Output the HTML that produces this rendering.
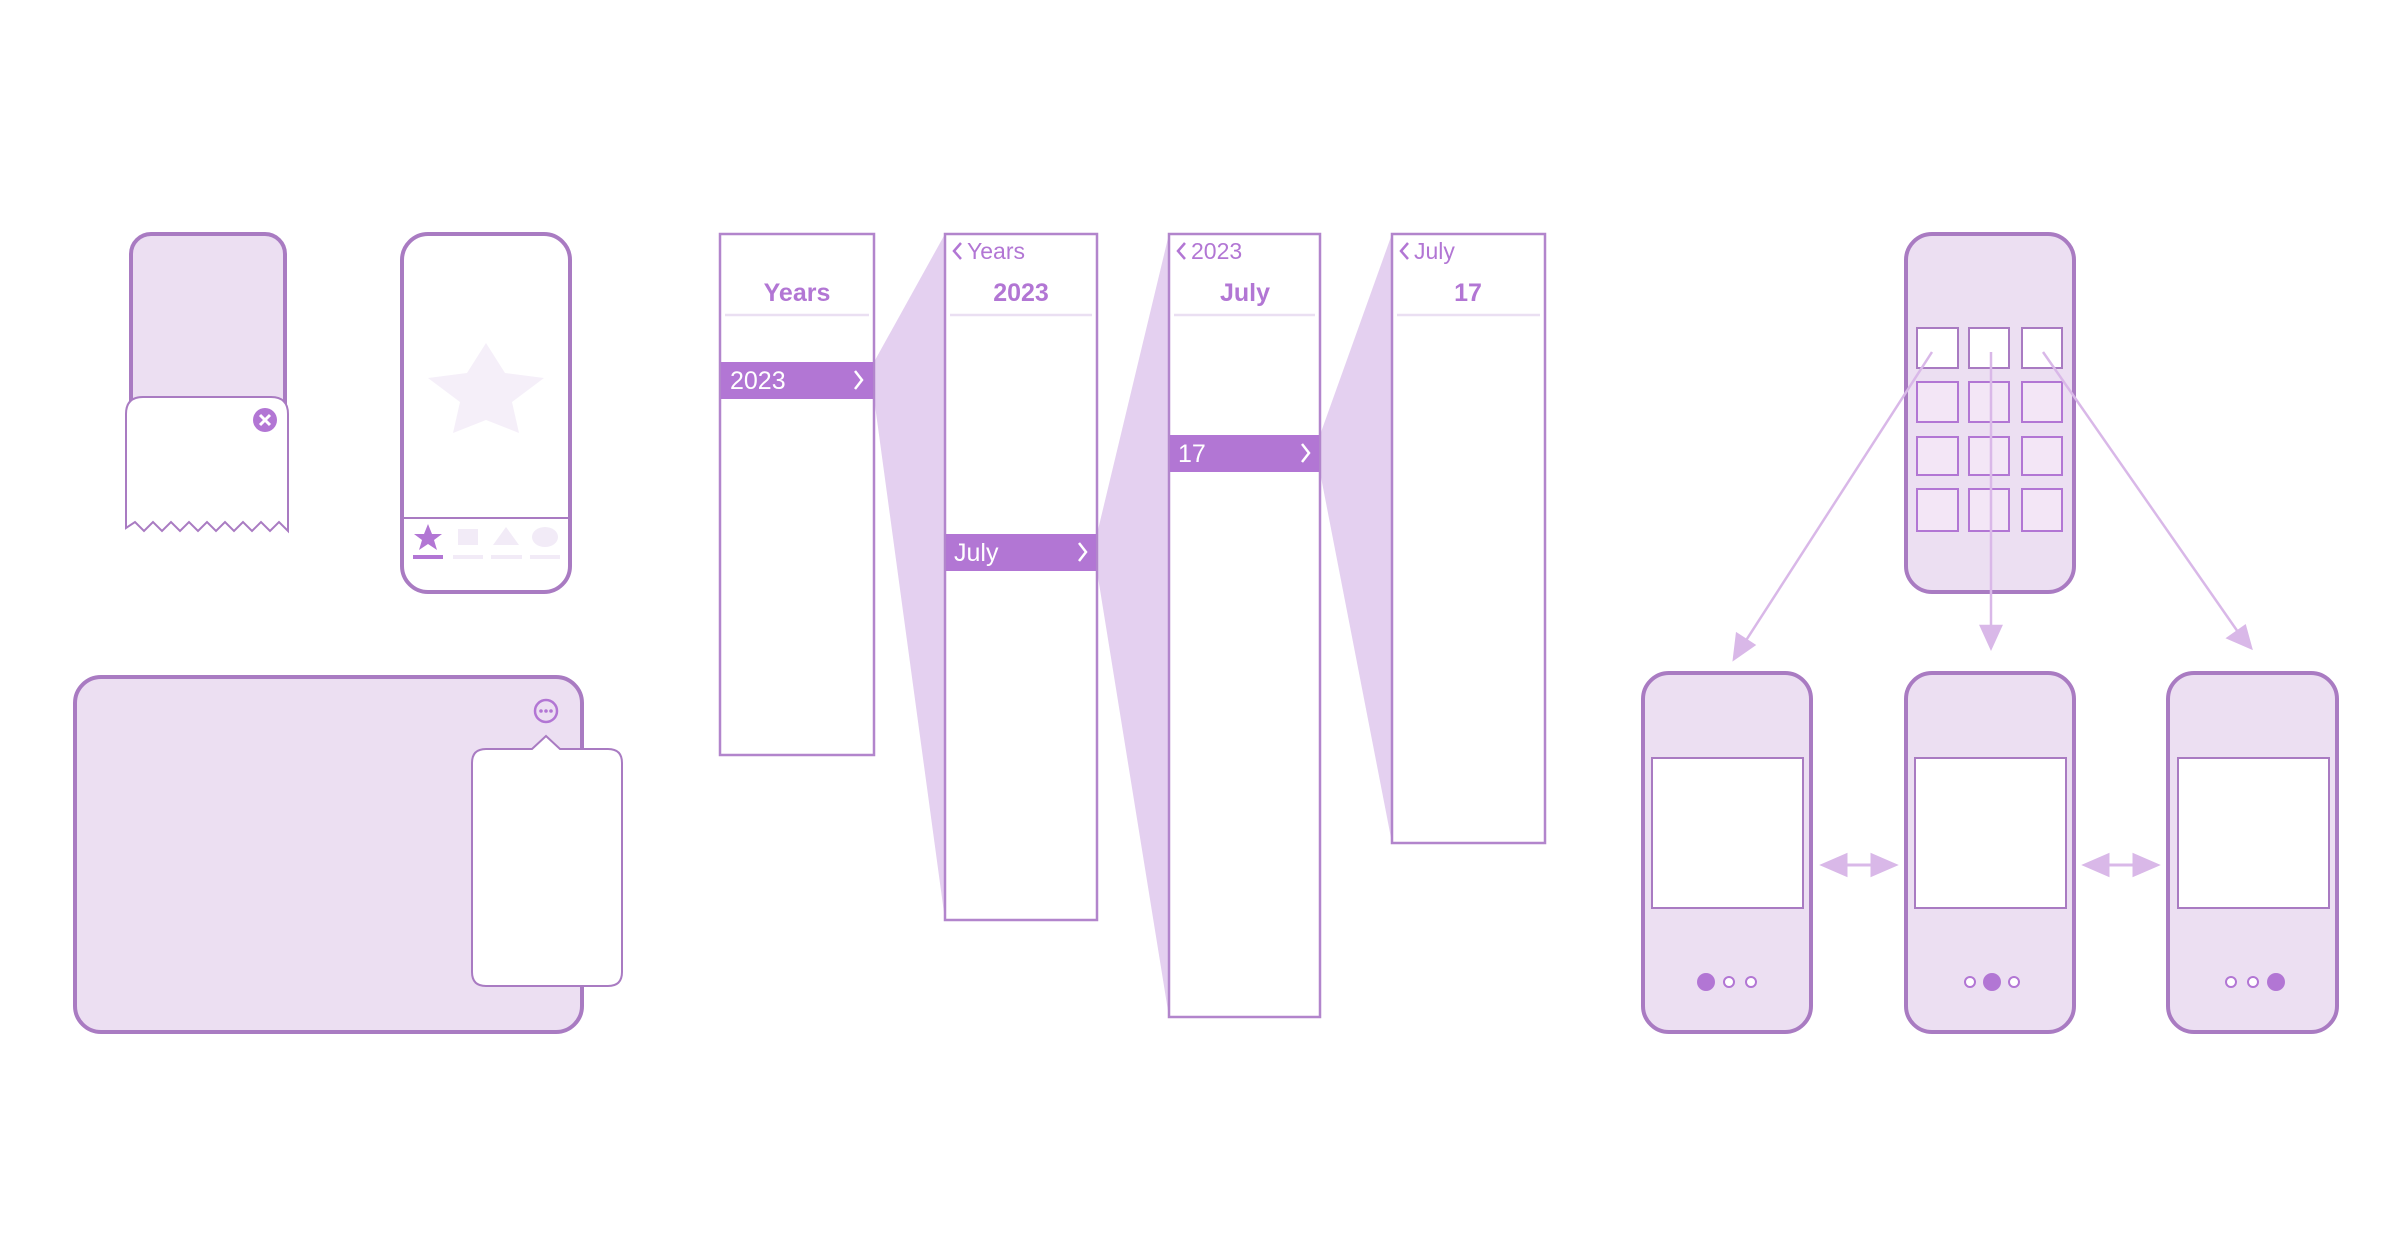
<!DOCTYPE html>
<html><head><meta charset="utf-8"><style>
html,body{margin:0;padding:0;background:#fff;}
svg{display:block;}
text{font-family:"Liberation Sans",sans-serif;}
</style></head><body>
<svg width="2400" height="1260" viewBox="0 0 2400 1260" xmlns="http://www.w3.org/2000/svg">
<!-- top-left sheet phone -->
<rect x="131" y="234" width="154" height="190" rx="20" fill="#ecdff2" stroke="#a97bc2" stroke-width="4"/>
<path d="M126,524 L126,414 Q126,397 143,397 L271,397 Q288,397 288,414 L288,531 L279,522 L270,531 L261,522 L252,531 L243,522 L234,531 L225,522 L216,531 L207,522 L198,531 L189,522 L180,531 L171,522 L162,531 L153,522 L144,531 L135,522 L126,528 Z" fill="#fff" stroke="#a97bc2" stroke-width="2"/>
<circle cx="265" cy="420" r="12" fill="#b276d4"/>
<path d="M260,415 L270,425 M270,415 L260,425" stroke="#fff" stroke-width="3"/>
<!-- tab phone -->
<rect x="402" y="234" width="168" height="358" rx="26" fill="#fff" stroke="#a97bc2" stroke-width="4"/>
<line x1="404" y1="518" x2="568" y2="518" stroke="#a97bc2" stroke-width="2"/>
<polygon points="486,343 505,373 544,378 512,402 519,433 486,420 453,433 460,402 428,378 467,373" fill="#f5eff9"/>
<polygon points="428,524 432,534 442,534 434,540 437,550 428,544 419,550 422,540 414,534 424,534" fill="#b276d4"/>
<rect x="458" y="529" width="20" height="16" fill="#f2ebf7"/>
<polygon points="506,527 519,545 493,545" fill="#f2ebf7"/>
<ellipse cx="545" cy="537" rx="13" ry="10" fill="#f2ebf7"/>
<rect x="413" y="555" width="30" height="4" fill="#b276d4"/>
<rect x="453" y="555" width="30" height="4" fill="#f2ebf7"/>
<rect x="491" y="555" width="31" height="4" fill="#f2ebf7"/>
<rect x="530" y="555" width="30" height="4" fill="#f2ebf7"/>
<!-- tablet -->
<rect x="75" y="677" width="507" height="355" rx="26" fill="#ecdff2" stroke="#a97bc2" stroke-width="4"/>
<circle cx="546" cy="711" r="11" fill="none" stroke="#b276d4" stroke-width="2.5"/>
<circle cx="541" cy="711" r="1.8" fill="#b276d4"/><circle cx="546" cy="711" r="1.8" fill="#b276d4"/><circle cx="551" cy="711" r="1.8" fill="#b276d4"/>
<path d="M486,749 Q472,749 472,763 L472,972 Q472,986 486,986 L608,986 Q622,986 622,972 L622,763 Q622,749 608,749 L560,749 L546,736 L532,749 Z" fill="#fff" stroke="#a97bc2" stroke-width="2"/>
<!-- drill-down polygons -->
<polygon points="874,362 945,234 945,920 874,398" fill="#e4d0f0"/>
<polygon points="1097,534 1169,234 1169,1017 1097,571" fill="#e4d0f0"/>
<polygon points="1320,435 1392,234 1392,843 1320,472" fill="#e4d0f0"/>
<!-- columns -->
<g stroke="#b285cc" stroke-width="2.5" fill="#fff">
<rect x="720" y="234" width="154" height="521"/>
<rect x="945" y="234" width="152" height="686"/>
<rect x="1169" y="234" width="151" height="783"/>
<rect x="1392" y="234" width="153" height="609"/>
</g>
<g stroke="#eadff2" stroke-width="2.5">
<line x1="725" y1="315" x2="869" y2="315"/><line x1="950" y1="315" x2="1092" y2="315"/>
<line x1="1174" y1="315" x2="1315" y2="315"/><line x1="1397" y1="315" x2="1540" y2="315"/>
</g>
<g fill="#b276d4" font-weight="bold" font-size="25" text-anchor="middle">
<text x="797" y="301">Years</text><text x="1021" y="301">2023</text>
<text x="1245" y="301">July</text><text x="1468" y="301">17</text>
</g>
<g fill="#b276d4" font-size="23">
<text x="967" y="259">Years</text><text x="1191" y="259">2023</text><text x="1414" y="259">July</text>
</g>
<g fill="none" stroke="#b276d4" stroke-width="2.5">
<path d="M961,243 L954,251 L961,259"/><path d="M1185,243 L1178,251 L1185,259"/><path d="M1408,243 L1401,251 L1408,259"/>
</g>
<rect x="721" y="362" width="152" height="37" fill="#b276d4"/>
<rect x="946" y="534" width="150" height="37" fill="#b276d4"/>
<rect x="1170" y="435" width="149" height="37" fill="#b276d4"/>
<g fill="#fff" font-size="25">
<text x="730" y="389">2023</text><text x="954" y="561">July</text><text x="1178" y="462">17</text>
</g>
<g fill="none" stroke="#fff" stroke-width="2.5">
<path d="M855,371 L862,380 L855,389"/><path d="M1079,543 L1086,552 L1079,561"/><path d="M1302,444 L1309,453 L1302,462"/>
</g>
<!-- right: grid phone -->
<rect x="1906" y="234" width="168" height="358" rx="26" fill="#ecdff2" stroke="#a97bc2" stroke-width="4"/>
<g stroke="#b276d4" stroke-width="2" fill="#f3e6f6">
<rect x="1917" y="382" width="41" height="40"/><rect x="1969" y="382" width="40" height="40"/><rect x="2022" y="382" width="40" height="40"/>
<rect x="1917" y="437" width="41" height="38"/><rect x="1969" y="437" width="40" height="38"/><rect x="2022" y="437" width="40" height="38"/>
<rect x="1917" y="489" width="41" height="42"/><rect x="1969" y="489" width="40" height="42"/><rect x="2022" y="489" width="40" height="42"/>
</g>
<g stroke="#a97bc2" stroke-width="2" fill="#fff">
<rect x="1917" y="328" width="41" height="40"/><rect x="1969" y="328" width="40" height="40"/><rect x="2022" y="328" width="40" height="40"/>
</g>
<g stroke="#d9b8e8" stroke-width="2.5" fill="#d9b8e8">
<line x1="1932" y1="352" x2="1745" y2="642"/><polygon points="1734,659 1737,634 1754,645"/>
<line x1="1991" y1="352" x2="1991" y2="628"/><polygon points="1991,648 1981,626 2001,626"/>
<line x1="2043" y1="352" x2="2238" y2="632"/><polygon points="2251,648 2228,638 2245,626"/>
</g>
<!-- bottom phones -->
<g stroke="#a97bc2" stroke-width="4" fill="#ecdff2">
<rect x="1643" y="673" width="168" height="359" rx="26"/>
<rect x="1906" y="673" width="168" height="359" rx="26"/>
<rect x="2168" y="673" width="169" height="359" rx="26"/>
</g>
<g stroke="#a97bc2" stroke-width="2" fill="#fff">
<rect x="1652" y="758" width="151" height="150"/>
<rect x="1915" y="758" width="151" height="150"/>
<rect x="2178" y="758" width="151" height="150"/>
</g>
<g fill="#b276d4">
<circle cx="1706" cy="982" r="9"/><circle cx="1992" cy="982" r="9"/><circle cx="2276" cy="982" r="9"/>
</g>
<g fill="#fff" stroke="#b276d4" stroke-width="2">
<circle cx="1729" cy="982" r="5"/><circle cx="1751" cy="982" r="5"/>
<circle cx="1970" cy="982" r="5"/><circle cx="2014" cy="982" r="5"/>
<circle cx="2231" cy="982" r="5"/><circle cx="2253" cy="982" r="5"/>
</g>
<g fill="#d9b8e8" stroke="#d9b8e8" stroke-width="3">
<line x1="1843" y1="865" x2="1876" y2="865"/><polygon points="1823,865 1846,855 1846,875"/><polygon points="1895,865 1872,855 1872,875"/>
<line x1="2105" y1="865" x2="2138" y2="865"/><polygon points="2085,865 2108,855 2108,875"/><polygon points="2157,865 2134,855 2134,875"/>
</g>
</svg>
</body></html>
